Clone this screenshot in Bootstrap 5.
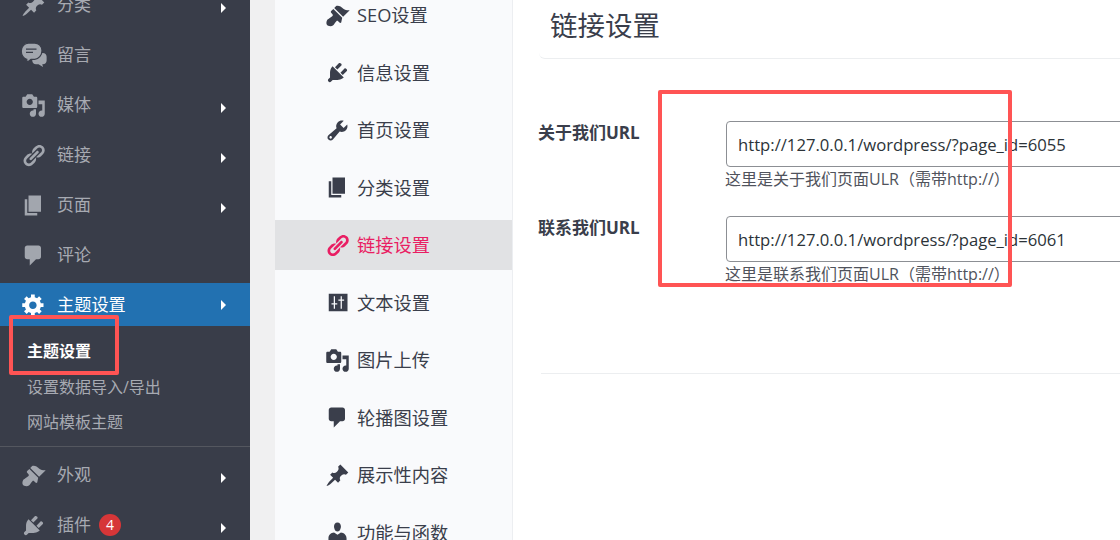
<!DOCTYPE html>
<html lang="zh-CN">
<head>
<meta charset="utf-8">
<title>链接设置</title>
<link rel="stylesheet" href="https://cdn.jsdelivr.net/npm/bootstrap@5.3.0/dist/css/bootstrap.min.css">
<style>
html,body{height:540px;overflow:hidden}
body{background:#f0f0f1;font-family:"Open Sans","Noto Sans CJK SC",sans-serif;color:#3a3e4b}
.page-shell{height:540px;position:relative;overflow:hidden}
.side-menu{width:250px;flex:none;background:#393d49;height:540px;overflow:hidden;padding-top:0}
.side-list{margin-top:-20px}
.side-item{height:50px;padding-left:21px;color:#a7aab2;font-size:17px;gap:11px;position:relative}
.side-item svg{width:25px;height:25px;fill:#a2a6ae;flex:none;overflow:visible}
.side-item.current{height:43px;margin-top:3px;background:#2271b1;color:#fff;font-size:17.2px}
.side-item.current svg{fill:#fff}
.side-arrow{position:absolute;left:221px;top:50%;margin-top:-2px;border-left:5px solid #fff;border-top:5px solid transparent;border-bottom:5px solid transparent}
.side-item.current .side-arrow{margin-top:-5px}
.side-sub{height:121px;padding:8px 0 0 27px;border-bottom:1px solid #54575f;font-size:16px;color:#a7aab2}
.side-sub div{height:35.5px;line-height:35.5px}
.side-sub .sub-on{color:#fff;font-weight:700}
.side-after{margin-top:3px}
.count-pill{background:#d63638;color:#fff;font-size:14px;font-weight:400;width:22px;height:22px;padding:0;line-height:22px;margin-left:-3px}
.tab-panel{width:238px;flex:none;margin-left:25px;height:540px;background:#f9fafc;border-right:1px solid #eceef1;overflow:hidden}
.tab-list{margin-top:-10px}
.tab-item{height:50px;margin-bottom:7.5px;padding-left:50px;gap:7px;font-size:18.25px;color:#3a3e4b}
.tab-item svg{width:25px;height:25px;fill:#3a3e4b;flex:none}
.tab-item span{position:relative;top:0}
.tab-item.on{background:#e1e2e4;color:#e91e63}
.tab-item.on svg{fill:#e91e63}
.main-pane{flex:1;background:#fff;height:540px;overflow:hidden;min-width:0}
.pane-head{height:59px;margin-left:26px;padding:8px 0 0 11px;border-bottom:1px solid #eceef0;border-bottom-left-radius:6px}
.pane-head h3{font-size:27.5px;font-weight:400;margin:0;line-height:36px;color:#3a3e4b}
.pane-body{margin-left:25px;height:314px;padding-top:62px}
.pane-rule{height:1px;background:#eceef0;margin-left:28px}
.field-row{height:95px}
.field-name{width:188px;flex:none;font-weight:700;font-size:17px;line-height:24px;color:#3a3e4b}
.field-box{width:420px;flex:none}
.field-box .form-control{height:46px;border-color:#8c8f94;font-size:16.67px;padding:6px 11px 5px;color:#2c3338;border-radius:4px}
.field-box .form-text{font-size:16px;color:#50535c;margin:0 0 0 -1px;line-height:24px}
.mark-box{position:absolute;border:4px solid #ff5454;border-radius:2px;pointer-events:none}
.mark-one{left:9px;top:315px;width:110px;height:60px}
.mark-two{left:658px;top:90px;width:354px;height:197px}
</style>
</head>
<body>
<svg width="0" height="0" class="d-none">
<defs>
<symbol id="i-pin" viewBox="0 0 20 20"><path d="M10.44 3.02l1.82-1.82 6.36 6.35-1.83 1.82c-1.05-.68-2.48-.57-3.41.36l-.75.75c-.92.93-1.04 2.35-.35 3.41l-1.83 1.82-2.41-2.41-2.8 2.79c-.42.42-3.38 2.71-3.8 2.29s1.86-3.39 2.28-3.81l2.79-2.79L4.1 9.36l1.83-1.82c1.05.69 2.48.57 3.4-.36l.75-.75c.93-.92 1.05-2.35.36-3.41z"/></symbol>
<symbol id="i-chat" viewBox="0 0 20 20" overflow="visible"><path d="M12 8h5.5c1.7 0 3 1.3 3 3v3c0 1.7-1.3 3-3 3h-.5l.6 2.2L14 17h-2c-1.7 0-3-1.3-3-3v-3c0-1.7 1.3-3 3-3z"/><path stroke="#393d49" stroke-width="1" d="M6 0h5c3 0 5.8 2.6 5.8 6.2S14 13 11 13H8l-3.2 2.6L4.6 13C2 12.6.2 9.6.2 6.4.2 2.8 3 0 6 0z"/><path fill="#393d49" d="M4 4.3h8.4v1H4zM4 7h5.6v1H4z"/></symbol>
<symbol id="i-media" viewBox="0 0 20 20"><path d="M13 11V4c0-.55-.45-1-1-1h-1.67L9 1H5L3.67 3H2c-.55 0-1 .45-1 1v7c0 .55.45 1 1 1h10c.55 0 1-.45 1-1zM7 4.5c1.38 0 2.5 1.12 2.5 2.5S8.38 9.5 7 9.5 4.5 8.38 4.5 7 5.62 4.5 7 4.5zM14 6h5v10.5c0 1.38-1.12 2.5-2.5 2.5S14 17.88 14 16.5s1.12-2.5 2.5-2.5c.17 0 .34.02.5.05V9h-3V6zm-4 8.05V13h2v3.5c0 1.38-1.12 2.5-2.5 2.5S7 17.88 7 16.5 8.12 14 9.5 14c.17 0 .34.02.5.05z"/></symbol>
<symbol id="i-link" viewBox="0 0 20 20"><path d="M17.74 2.76c1.68 1.69 1.68 4.41 0 6.1l-1.53 1.52c-1.12 1.12-2.7 1.47-4.14 1.09l2.62-2.61.76-.77.76-.76c.84-.84.84-2.2 0-3.04-.84-.85-2.2-.85-3.04 0l-.77.76-3.38 3.38c-.37-1.44-.02-3.02 1.1-4.14l1.52-1.53c1.69-1.68 4.42-1.68 6.1 0zM8.59 13.43l5.34-5.34c.42-.42.42-1.1 0-1.52-.44-.43-1.13-.39-1.53 0l-5.33 5.34c-.42.42-.42 1.1 0 1.52.44.43 1.13.39 1.52 0zm-.76 2.29l4.14-4.15c.38 1.44.03 3.02-1.09 4.14l-1.52 1.53c-1.69 1.68-4.41 1.68-6.1 0-1.68-1.68-1.68-4.42 0-6.1l1.53-1.52c1.12-1.12 2.7-1.47 4.14-1.1l-4.14 4.15c-.85.84-.85 2.2 0 3.05.84.84 2.2.84 3.04 0z"/></symbol>
<symbol id="i-page" viewBox="0 0 20 20"><path d="M6 15V2h10v13H6zm-1 1h8v2H3V5h2v11z"/></symbol>
<symbol id="i-bubble" viewBox="0 0 20 20"><path d="M5 2h9c1.1 0 2 .9 2 2v7c0 1.1-.9 2-2 2h-2l-5 5v-5H5c-1.1 0-2-.9-2-2V4c0-1.1.9-2 2-2z"/></symbol>
<symbol id="i-gear" viewBox="0 0 20 20"><path d="M18 12h-2.18c-.17.7-.44 1.35-.81 1.93l1.54 1.54-2.1 2.1-1.54-1.54c-.58.36-1.23.63-1.91.79V19H8v-2.18c-.68-.16-1.33-.43-1.91-.79l-1.54 1.54-2.12-2.12 1.54-1.54c-.36-.58-.63-1.23-.79-1.91H1V9.03h2.17c.16-.7.44-1.35.8-1.94L2.43 5.55l2.1-2.1 1.54 1.54c.58-.37 1.24-.64 1.93-.81V2h3v2.18c.68.16 1.33.43 1.91.79l1.54-1.54 2.12 2.12-1.54 1.54c.36.59.64 1.24.8 1.94H18V12zm-8.5 1.5c1.66 0 3-1.34 3-3s-1.34-3-3-3-3 1.34-3 3 1.34 3 3 3z"/></symbol>
<symbol id="i-brush" viewBox="0 0 20 20"><path d="M14.48 11.06L7.41 3.99l1.5-1.5c.5-.56 2.3-.47 3.51.32 1.21.8 1.43 1.28 2.91 2.1 1.18.64 2.45 1.26 4.45.85zm-.71.71L6.7 4.7 4.93 6.47c-.39.39-.39 1.02 0 1.41l1.06 1.06c.39.39.39 1.03 0 1.42-.6.6-1.43 1.11-2.21 1.69-.35.26-.7.53-1.01.84C1.43 13.23.78 15.78 1.4 17.2c.62 1.42 3.82 1.95 5.17.6.31-.31.58-.66.84-1.01.58-.78 1.09-1.61 1.69-2.21.39-.39 1.02-.39 1.41 0l1.06 1.06c.39.39 1.02.39 1.41 0z"/></symbol>
<symbol id="i-plug" viewBox="0 0 20 20"><path d="M13.11 4.36L9.87 7.6 8 5.73l3.24-3.24c.35-.34 1.05-.2 1.56.32.52.51.66 1.21.31 1.55zm-8 1.77l.91-1.12 9.01 9.01-1.19.84c-.71.71-2.63 1.16-3.82 1.16H6.14L4.9 17.26c-.59.59-1.54.59-2.12 0-.59-.58-.59-1.53 0-2.12l1.24-1.24v-3.88c0-1.13.4-3.19 1.09-3.89zm7.26 3.97l3.24-3.24c.34-.35 1.04-.21 1.55.31.52.51.66 1.21.31 1.55l-3.24 3.25z"/></symbol>
<symbol id="i-wrench" viewBox="0 0 20 20"><path d="M16.68 9.77c-1.34 1.34-3.3 1.67-4.95.99l-5.41 6.52c-.99.99-2.59.99-3.58 0s-.99-2.59 0-3.57l6.52-5.42c-.68-1.65-.35-3.61.99-4.95 1.28-1.28 3.12-1.62 4.72-1.06l-2.89 2.89 2.82 2.82 2.86-2.87c.53 1.58.18 3.39-1.08 4.65zM3.81 16.21c.4.39 1.04.39 1.43 0 .4-.4.4-1.04 0-1.43-.39-.4-1.03-.4-1.43 0-.39.39-.39 1.03 0 1.43z"/></symbol>
<symbol id="i-sliders" viewBox="0 0 20 20"><path fill-rule="evenodd" d="M3 3h15v14H3zM8 11.5h1.8v-1H8V5h-1v5.5H5.2v1H7V15h1zM13.5 8.5h1.8v-1h-1.8V5h-1v2.5h-1.8v1h1.8V15h1z"/></symbol>
<symbol id="i-user" viewBox="0 0 20 20"><path d="M10 9.25c-2.27 0-2.73-3.44-2.73-3.44C7 4.02 7.82 2 9.97 2c2.16 0 2.98 2.02 2.71 3.81 0 0-.41 3.44-2.68 3.44zm0 2.57L12.72 10c2.39 0 4.52 2.33 4.52 4.53v2.49s-3.65 1.13-7.24 1.13c-3.65 0-7.24-1.13-7.24-1.13v-2.49c0-2.25 1.94-4.48 4.47-4.48z"/></symbol>
</defs>
</svg>
<div class="page-shell d-flex">
  <nav class="side-menu">
    <div class="side-list">
      <div class="side-item d-flex align-items-center"><svg><use href="#i-pin"/></svg><span>分类</span><i class="side-arrow"></i></div>
      <div class="side-item d-flex align-items-center"><svg><use href="#i-chat"/></svg><span>留言</span></div>
      <div class="side-item d-flex align-items-center"><svg><use href="#i-media"/></svg><span>媒体</span><i class="side-arrow"></i></div>
      <div class="side-item d-flex align-items-center"><svg><use href="#i-link"/></svg><span>链接</span><i class="side-arrow"></i></div>
      <div class="side-item d-flex align-items-center"><svg><use href="#i-page"/></svg><span>页面</span><i class="side-arrow"></i></div>
      <div class="side-item d-flex align-items-center"><svg><use href="#i-bubble"/></svg><span>评论</span></div>
      <div class="side-item current d-flex align-items-center"><svg><use href="#i-gear"/></svg><span>主题设置</span><i class="side-arrow"></i></div>
      <div class="side-sub">
        <div class="sub-on">主题设置</div>
        <div>设置数据导入/导出</div>
        <div>网站模板主题</div>
      </div>
      <div class="side-after">
      <div class="side-item d-flex align-items-center"><svg><use href="#i-brush"/></svg><span>外观</span><i class="side-arrow"></i></div>
      <div class="side-item d-flex align-items-center"><svg><use href="#i-plug"/></svg><span>插件</span><span class="badge rounded-pill count-pill">4</span><i class="side-arrow"></i></div>
      </div>
    </div>
  </nav>
  <aside class="tab-panel">
    <div class="tab-list">
      <div class="tab-item d-flex align-items-center"><svg><use href="#i-brush"/></svg><span>SEO设置</span></div>
      <div class="tab-item d-flex align-items-center"><svg><use href="#i-plug"/></svg><span>信息设置</span></div>
      <div class="tab-item d-flex align-items-center"><svg><use href="#i-wrench"/></svg><span>首页设置</span></div>
      <div class="tab-item d-flex align-items-center"><svg><use href="#i-page"/></svg><span>分类设置</span></div>
      <div class="tab-item on d-flex align-items-center"><svg><use href="#i-link"/></svg><span>链接设置</span></div>
      <div class="tab-item d-flex align-items-center"><svg><use href="#i-sliders"/></svg><span>文本设置</span></div>
      <div class="tab-item d-flex align-items-center"><svg><use href="#i-media"/></svg><span>图片上传</span></div>
      <div class="tab-item d-flex align-items-center"><svg><use href="#i-bubble"/></svg><span>轮播图设置</span></div>
      <div class="tab-item d-flex align-items-center"><svg><use href="#i-pin"/></svg><span>展示性内容</span></div>
      <div class="tab-item d-flex align-items-center"><svg><use href="#i-user"/></svg><span>功能与函数</span></div>
    </div>
  </aside>
  <main class="main-pane">
    <div class="pane-head"><h3>链接设置</h3></div>
    <div class="pane-body">
      <div class="field-row d-flex">
        <div class="field-name">关于我们URL</div>
        <div class="field-box"><input class="form-control" type="text" value="http://127.0.0.1/wordpress/?page_id=6055"><div class="form-text">这里是关于我们页面ULR（需带http://）</div></div>
      </div>
      <div class="field-row d-flex">
        <div class="field-name">联系我们URL</div>
        <div class="field-box"><input class="form-control" type="text" value="http://127.0.0.1/wordpress/?page_id=6061"><div class="form-text">这里是联系我们页面ULR（需带http://）</div></div>
      </div>
    </div>
    <div class="pane-rule"></div>
  </main>
  <div class="mark-box mark-one"></div>
  <div class="mark-box mark-two"></div>
</div>
<script src="https://cdn.jsdelivr.net/npm/bootstrap@5.3.0/dist/js/bootstrap.bundle.min.js"></script>
</body>
</html>
